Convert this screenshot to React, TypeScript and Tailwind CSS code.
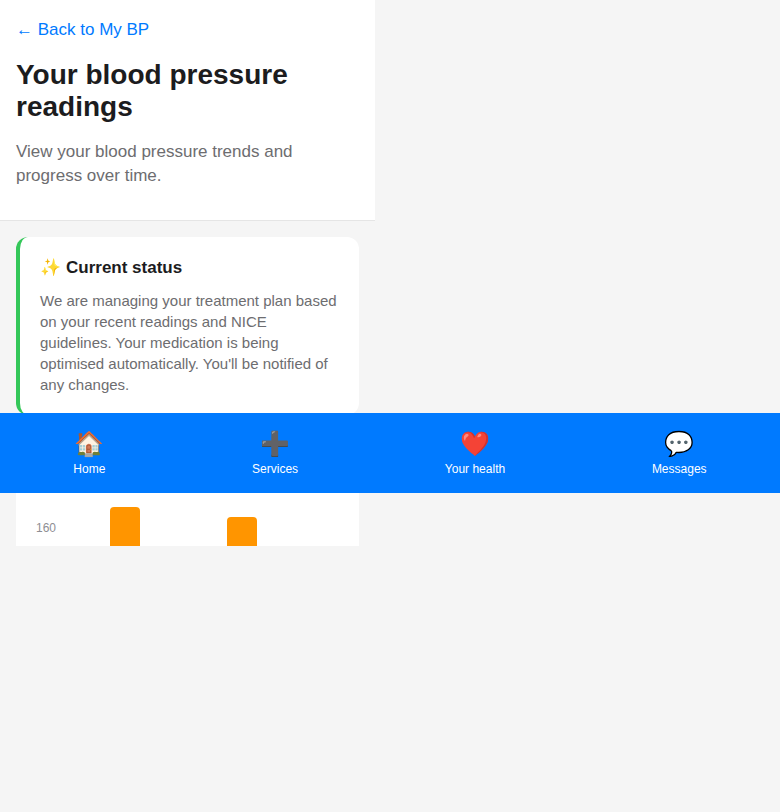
const tabs = [
  { icon: '🏠', label: 'Home' },
  { icon: '➕', label: 'Services' },
  { icon: '❤️', label: 'Your health' },
  { icon: '💬', label: 'Messages' },
];

export default function App() {
  return (
    <div className="relative h-[812px] w-full overflow-hidden bg-[#f5f5f5] font-['Liberation_Sans',Arial,sans-serif]">
      <div className="h-[546px] w-[375px] overflow-hidden">
        <header className="h-[221px] border-b border-[#e5e5e5] bg-white px-4 pt-4">
          <a className="block h-[27px] text-[17px] leading-[27px] text-[#007aff]">← Back to My BP</a>
          <h1 className="mt-4 text-[28px] leading-8 font-bold text-[#1c1c1e]">Your blood pressure readings</h1>
          <p className="mt-[17px] text-[17px] leading-6 text-[#6d6d70]">View your blood pressure trends and progress over time.</p>
        </header>
        <main className="flex flex-col gap-4 p-4">
          <section className="h-[178px] rounded-xl border-l-4 border-[#34c759] bg-white p-5">
            <h2 className="flex gap-[5px] text-[17px] leading-[21px] font-bold text-[#1c1c1e]">
              <span>✨</span>
              <span>Current status</span>
            </h2>
            <p className="mt-3 text-[15px] leading-[21px] text-[#6d6d70]">
              We are managing your treatment plan based on your recent readings and NICE guidelines. Your medication is being optimised automatically. You'll be notified of any changes.
            </p>
          </section>
          <section className="h-[320px] shrink-0 rounded-xl bg-white px-5 pt-[76px]">
            <div className="flex">
              <span className="mt-[14px] w-[74px] text-xs leading-[14px] text-[#8e8e93]">160</span>
              <div className="h-[200px] w-[30px] rounded-t bg-[#ff9500]" />
              <div className="mt-[10px] ml-[87px] h-[190px] w-[30px] rounded-t bg-[#ff9500]" />
            </div>
          </section>
        </main>
      </div>
      <nav className="absolute inset-x-0 top-[413px] flex h-20 items-center justify-around bg-[#007aff] text-white">
        {tabs.map((tab) => (
          <a key={tab.label} className="flex flex-col items-center gap-1">
            <span className="text-2xl leading-7">{tab.icon}</span>
            <span className="text-xs leading-[14px]">{tab.label}</span>
          </a>
        ))}
      </nav>
    </div>
  );
}
